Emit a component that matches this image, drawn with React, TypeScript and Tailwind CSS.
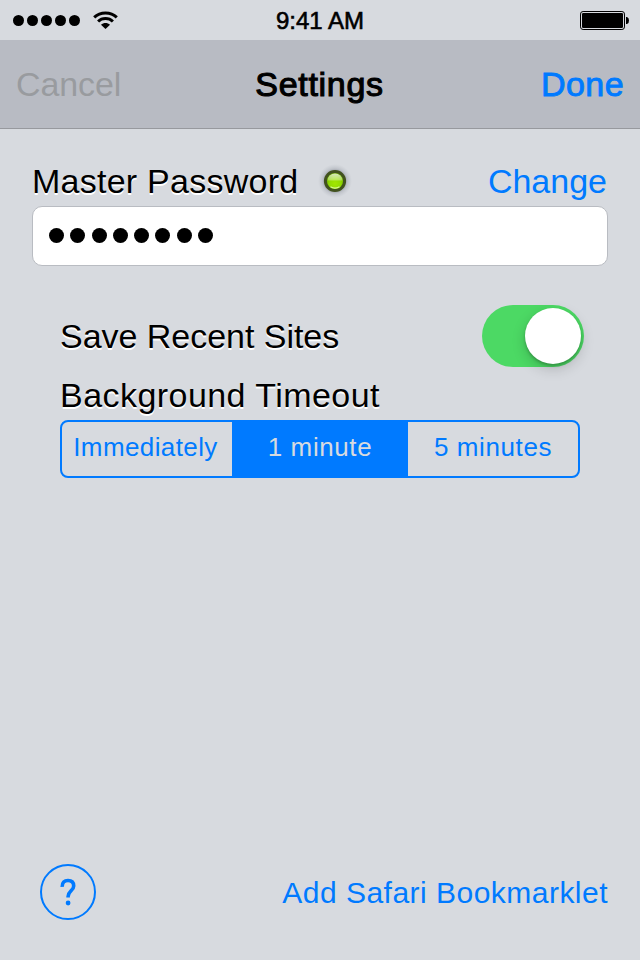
import React from 'react';

const SIGNAL = [0, 1, 2, 3, 4];
const PASSWORD_DOTS = [0, 1, 2, 3, 4, 5, 6, 7];

function WifiIcon() {
  return (
    <svg className="ml-[13px] h-[19px] w-[25px]" viewBox="0 0 25 19" fill="none">
      <path d="M1.2 6.3C7.3.4 17.7.4 23.8 6.3" stroke="#000" strokeWidth="3" />
      <path d="M5.1 10.5C9.1 6.6 15.9 6.6 19.9 10.5" stroke="#000" strokeWidth="3" />
      <path d="M12.5 18 8 13.7C10.6 11.5 14.4 11.5 17 13.7Z" fill="#000" />
    </svg>
  );
}

function BatteryIcon() {
  return (
    <svg className="mb-[2px] h-[20px] w-[50px]" viewBox="0 0 50 20">
      <rect x="0.5" y="1.5" width="44" height="18" rx="2.6" fill="none" stroke="#000" />
      <rect x="2" y="3" width="41" height="15" rx="1.3" fill="#000" />
      <path d="M46 7H47Q49 7.5 49 10.5T47 14H46Z" fill="#000" />
    </svg>
  );
}

function StatusLight() {
  return (
    <svg className="h-[40px] w-[40px]" viewBox="0 0 40 40">
      <defs>
        <radialGradient id="halo">
          <stop offset="0.5" stopColor="#4a505c" stopOpacity="0.6" />
          <stop offset="0.75" stopColor="#6a707c" stopOpacity="0.2" />
          <stop offset="1" stopColor="#8a909c" stopOpacity="0" />
        </radialGradient>
        <radialGradient id="lamp" cx="0.5" cy="0.62" r="0.5">
          <stop offset="0" stopColor="#a2e600" />
          <stop offset="0.6" stopColor="#92da00" />
          <stop offset="1" stopColor="#6fb000" />
        </radialGradient>
        <linearGradient id="gloss" x1="0" y1="0" x2="0" y2="1">
          <stop offset="0" stopColor="#fff" stopOpacity="0.75" />
          <stop offset="1" stopColor="#fff" stopOpacity="0.3" />
        </linearGradient>
      </defs>
      <circle cx="20" cy="20" r="17" fill="url(#halo)" />
      <circle cx="20" cy="20" r="9.6" fill="url(#lamp)" stroke="#42521e" strokeWidth="3" />
      <path d="M12.6 19.4A7.4 7 0 0 1 27.4 19.4Z" fill="url(#gloss)" />
      <path d="M15.5 25.8Q20 28.6 24.5 25.8" fill="none" stroke="#dcf89a" strokeWidth="1.2" />
    </svg>
  );
}

export default function App() {
  return (
    <div className="flex h-[960px] w-[640px] flex-col overflow-hidden bg-[#d7dadf] font-['Liberation_Sans',Arial,sans-serif] text-[34px] leading-10 text-black">
      <header>
        <div className="grid h-10 grid-cols-3 items-center pr-[10px] pl-[13px]">
          <div className="flex items-center pb-px">
            <div className="flex gap-[3px]">
              {SIGNAL.map((dot) => (
                <span key={dot} className="size-[11px] rounded-full bg-black" />
              ))}
            </div>
            <WifiIcon />
          </div>
          <span className="pr-[3px] text-center text-2xl leading-[42px] whitespace-nowrap [-webkit-text-stroke:0.6px]">9:41 AM</span>
          <div className="flex justify-end">
            <BatteryIcon />
          </div>
        </div>
        <nav className="grid h-[89px] grid-cols-3 items-center border-b border-[#97999e] bg-[#b8bbc3] px-4">
          <button className="text-left tracking-[-0.1px] text-[#999b9f]">Cancel</button>
          <h1 className="pr-px text-center tracking-[0.7px] [-webkit-text-stroke:1.1px]">Settings</h1>
          <button className="text-right tracking-[0.4px] text-[#007aff] [-webkit-text-stroke:0.9px]">Done</button>
        </nav>
      </header>

      <main className="flex flex-1 flex-col">
        <section className="px-8 pt-8">
          <div className="flex h-[45px] items-start">
            <label className="w-[283px] tracking-[0.25px] whitespace-nowrap [text-shadow:0_2px_0_#fff]">Master Password</label>
            <StatusLight />
            <button className="ml-auto pr-[1px] text-[#007aff]">Change</button>
          </div>
          <div className="flex h-[60px] items-center gap-[6.3px] rounded-[10px] border border-[#b9bcc2] bg-white pb-[2px] pl-4">
            {PASSWORD_DOTS.map((dot) => (
              <span key={dot} className="size-[15px] rounded-full bg-black" />
            ))}
          </div>
        </section>

        <section className="px-[60px] pt-[39px]">
          <div className="flex h-[62px] items-center justify-between">
            <span className="tracking-[-0.03px] [text-shadow:0_2px_0_#fff]">Save Recent Sites</span>
            <div className="-mr-1 flex h-[62px] w-[102px] items-center justify-end rounded-full bg-[#4cd964] pr-[3px]">
              <span className="size-14 rounded-full bg-white shadow-[0_5px_14px_rgba(0,0,0,0.18),0_2px_3px_rgba(0,0,0,0.22)]" />
            </div>
          </div>
          <div className="mt-2 h-[45px] tracking-[0.45px] [text-shadow:0_2px_0_#fff]">Background Timeout</div>
          <div className="flex h-[58px] overflow-hidden rounded-[8px] border-2 border-[#007aff] text-[26px] leading-[50px] tracking-[0.6px] text-[#007aff]">
            <button className="w-[170px] pr-[3px] pb-1 tracking-[0.4px]">Immediately</button>
            <button className="w-[176px] bg-[#007aff] pb-1 text-[#d7dadf]">1 minute</button>
            <button className="w-[170px] pb-1">5 minutes</button>
          </div>
        </section>

        <footer className="mt-auto flex items-center justify-between pr-8 pb-10 pl-10">
          <button className="flex size-14 items-center justify-center rounded-full border-2 border-[#007aff]">
            <svg className="h-[28px] w-[18px]" viewBox="0 0 18 28" fill="none">
              <path d="M3.2 8.8C3 4.3 5.4 2.5 9 2.5C12.6 2.5 14.7 4.6 14.7 7.9C14.7 12.7 9.1 13 9.1 18.5V19.6" stroke="#007aff" strokeWidth="3.6" />
              <circle cx="9.1" cy="25" r="2.4" fill="#007aff" />
            </svg>
          </button>
          <button className="pt-[2px] text-[30px] tracking-[0.48px] whitespace-nowrap text-[#007aff]">Add Safari Bookmarklet</button>
        </footer>
      </main>
    </div>
  );
}
